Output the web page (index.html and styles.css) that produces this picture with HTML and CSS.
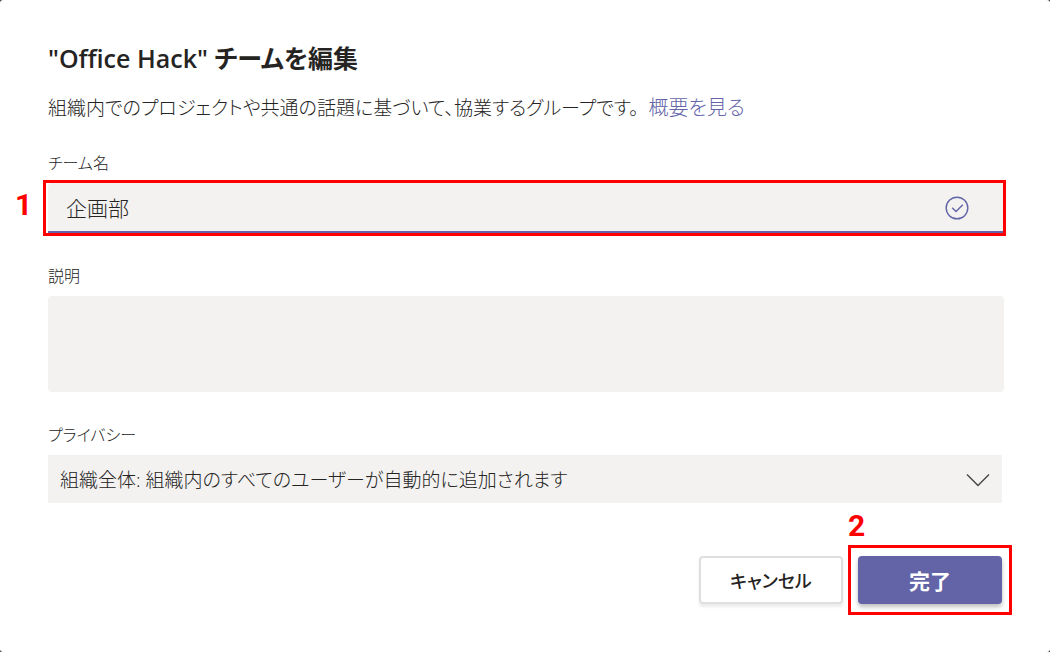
FILE: index.html
```html
<!DOCTYPE html>
<html lang="ja">
<head>
<meta charset="utf-8">
<title>チームを編集</title>
<link rel="stylesheet" href="styles.css">
</head>
<body>
<main class="dialog">
  <h1 class="title">"Office Hack" チームを編集</h1>
  <p class="lead">組織内でのプロジェクトや共通の話題に基づいて、協業するグループです。<a class="link" href="#">概要を見る</a></p>
  <form class="form">
    <div class="field">
      <label class="label" for="name">チーム名</label>
      <div class="control">
        <input class="input" id="name" type="text" value="企画部">
        <svg class="check" viewBox="0 0 24 24" aria-hidden="true"><circle cx="12" cy="12" r="10.8"/><path d="M7.2 11.8l3.8 3.8 6.8-6.8"/></svg>
        <span class="mark mark-name"><b class="step">1</b></span>
      </div>
    </div>
    <div class="field">
      <label class="label" for="desc">説明</label>
      <textarea class="textarea" id="desc"></textarea>
    </div>
    <div class="field">
      <label class="label" for="privacy">プライバシー</label>
      <div class="control control-select">
        <select class="select" id="privacy"><option>組織全体: 組織内のすべてのユーザーが自動的に追加されます</option></select>
        <svg class="chevron" viewBox="0 0 24 14" aria-hidden="true"><path d="M1 1.5l11 11 11-11"/></svg>
      </div>
    </div>
    <div class="actions">
      <button class="button" type="button">キャンセル</button>
      <div class="control">
        <button class="button primary" type="submit">完了</button>
        <span class="mark mark-done"><b class="step">2</b></span>
      </div>
    </div>
  </form>
</main>
</body>
</html>
```
FILE: styles.css
```css
* { box-sizing: border-box; }

html { background: #333; }

body {
  margin: 0;
  color: #252423;
  font-family: "Open Sans", "Noto Sans CJK JP", sans-serif;
  font-size: 19px;
  font-weight: 300;
  font-feature-settings: "palt";
}

.dialog {
  min-height: 100vh;
  padding: 40px 46px 48px 48px;
  background: #fff;
  border-radius: 3px;
}

.title {
  margin: 0 0 18px;
  font-size: 25px;
  font-weight: 600;
  line-height: 36px;
}

.lead {
  margin: 0 0 29px;
  line-height: 28px;
}

.link {
  margin-left: 10px;
  color: #6264a7;
  font-size: 20px;
  text-decoration: none;
}

.form {
  display: flex;
  flex-direction: column;
  gap: 31px;
}

.field {
  display: flex;
  flex-direction: column;
  gap: 8px;
}

.label {
  font-size: 16px;
  line-height: 24px;
}

.control { position: relative; }

.control-select { margin-right: 2px; }

.input,
.textarea,
.select {
  display: block;
  width: 100%;
  border: 0;
  outline: 0;
  background: #f3f2f1;
  color: inherit;
  font: inherit;
  font-feature-settings: inherit;
}

.input {
  height: 50px;
  padding: 0 64px 0 18px;
  border-bottom: 2px solid #6264a7;
  border-radius: 4px 4px 0 0;
  font-size: 21px;
}

.textarea {
  height: 96px;
  padding: 12px 18px;
  border-radius: 4px;
  resize: none;
}

.select {
  height: 48px;
  padding: 2px 48px 0 12px;
  border-radius: 0;
  appearance: none;
}

.check,
.chevron {
  position: absolute;
  fill: none;
  pointer-events: none;
}

.check {
  top: 13px;
  right: 35px;
  width: 24px;
  height: 24px;
  stroke: #6264a7;
  stroke-width: 1.4;
}

.chevron {
  top: 18px;
  right: 12px;
  width: 24px;
  height: 14px;
  stroke: #484644;
  stroke-width: 1.4;
}

.actions {
  display: flex;
  justify-content: flex-end;
  gap: 15px;
  margin: 22px 2px 0 0;
}

.button {
  display: block;
  width: 144px;
  height: 48px;
  padding: 0;
  border: 2px solid #e1dfdd;
  border-radius: 4px;
  background: #fff;
  box-shadow: 0 3px 3px rgba(0, 0, 0, 0.08);
  color: #252423;
  font: inherit;
  font-feature-settings: inherit;
  font-size: 18px;
  font-weight: 500;
}

.primary {
  border: 0;
  background: #6264a7;
  box-shadow: 0 3px 4px rgba(0, 0, 0, 0.25);
  color: #fff;
  font-size: 21px;
  font-weight: 700;
}

.mark {
  position: absolute;
  border: 3px solid #f00;
  pointer-events: none;
}

.mark-name { inset: -3px -2px -3px -5px; }

.mark-done { inset: -11px -10px -11px -10px; }

.step {
  position: absolute;
  color: #f00;
  font: bold 30px/30px Roboto, Arial, sans-serif;
}

.mark-name .step {
  top: 7px;
  left: -31px;
}

.mark-done .step {
  top: -37px;
  left: -3px;
}
```
